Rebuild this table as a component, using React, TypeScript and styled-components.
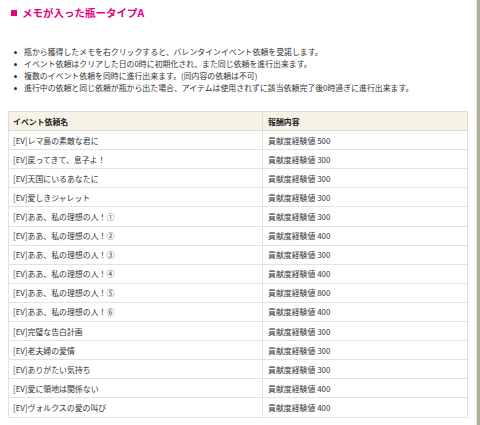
import React from "react";
import styled, { createGlobalStyle } from "styled-components";

const Global = createGlobalStyle`
  html, body { margin: 0; padding: 0; background: #fff; }
  body { font-family: "Noto Sans CJK JP", "Noto Sans", sans-serif; color: #333; }
`;

const Page = styled.div`
  display: flex;
  width: 480px;
  height: 425px;
  overflow: hidden;
`;

const Main = styled.div`
  width: 468px;
  padding: 6px 8px 0 8px;
  border-right: 1px solid #e4e4e0;
`;

const SideBar = styled.div`
  width: 3px;
  background: #b0ac98;
`;

const Title = styled.h2`
  margin: 0;
  display: flex;
  align-items: center;
  gap: 5px;
  padding-left: 3px;
  font-size: 10.5px;
  line-height: 14px;
  font-weight: bold;
  color: #e5007f;
`;

const Square = styled.span`
  width: 6px;
  height: 6px;
  background: #e5007f;
`;

const Notes = styled.ul`
  list-style: none;
  margin: 26px 0 0 0;
  padding: 0 0 0 16px;
`;

const Note = styled.li`
  position: relative;
  font-size: 7.9px;
  line-height: 12px;
  color: #333;
  &::before {
    content: "";
    position: absolute;
    left: -10px;
    top: 5px;
    width: 3px;
    height: 3px;
    border-radius: 50%;
    background: #333;
  }
`;

const Table = styled.table`
  margin-top: 17px;
  width: 459px;
  border-collapse: collapse;
  table-layout: fixed;
  font-size: 7.9px;
`;

const Row = styled.tr`
  height: 19.1px;
`;

const Head = styled.th`
  background: #f6f3e6;
  border: 1px solid #dedcd4;
  text-align: left;
  font-weight: bold;
  color: #222;
  padding: 0 4px;
  &:last-child { padding-left: 5px; }
`;

const Cell = styled.td<{ $wide?: boolean }>`
  border: 1px solid #e2e2e2;
  padding: 0 4px;
  color: #333;
  white-space: nowrap;
  &:last-child { padding-left: 5px; }
`;

const rows: [string, number][] = [
  ["[EV]レマ島の素敵な君に", 500],
  ["[EV]戻ってきて、息子よ！", 300],
  ["[EV]天国にいるあなたに", 300],
  ["[EV]愛しきジャレット", 300],
  ["[EV]ああ、私の理想の人！①", 300],
  ["[EV]ああ、私の理想の人！②", 400],
  ["[EV]ああ、私の理想の人！③", 300],
  ["[EV]ああ、私の理想の人！④", 400],
  ["[EV]ああ、私の理想の人！⑤", 800],
  ["[EV]ああ、私の理想の人！⑥", 400],
  ["[EV]完璧な告白計画", 300],
  ["[EV]老夫婦の愛情", 300],
  ["[EV]ありがたい気持ち", 300],
  ["[EV]愛に領地は関係ない", 400],
  ["[EV]ヴォルクスの愛の叫び", 400],
];

export default function App() {
  return (
    <>
      <Global />
      <Page>
        <Main>
          <Title>
            <Square />
            メモが入った瓶ータイプA
          </Title>
          <Notes>
            <Note>瓶から獲得したメモを右クリックすると、バレンタインイベント依頼を受諾します。</Note>
            <Note>イベント依頼はクリアした日の0時に初期化され、また同じ依頼を進行出来ます。</Note>
            <Note>複数のイベント依頼を同時に進行出来ます。(同内容の依頼は不可)</Note>
            <Note>進行中の依頼と同じ依頼が瓶から出た場合、アイテムは使用されずに該当依頼完了後0時過ぎに進行出来ます。</Note>
          </Notes>
          <Table>
            <colgroup>
              <col style={{ width: 254 }} />
              <col style={{ width: 205 }} />
            </colgroup>
            <thead>
              <Row>
                <Head>イベント依頼名</Head>
                <Head>報酬内容</Head>
              </Row>
            </thead>
            <tbody>
              {rows.map(([name, exp]) => (
                <Row key={name}>
                  <Cell>{name}</Cell>
                  <Cell>貢献度経験値 {exp}</Cell>
                </Row>
              ))}
            </tbody>
          </Table>
        </Main>
        <SideBar />
      </Page>
    </>
  );
}
